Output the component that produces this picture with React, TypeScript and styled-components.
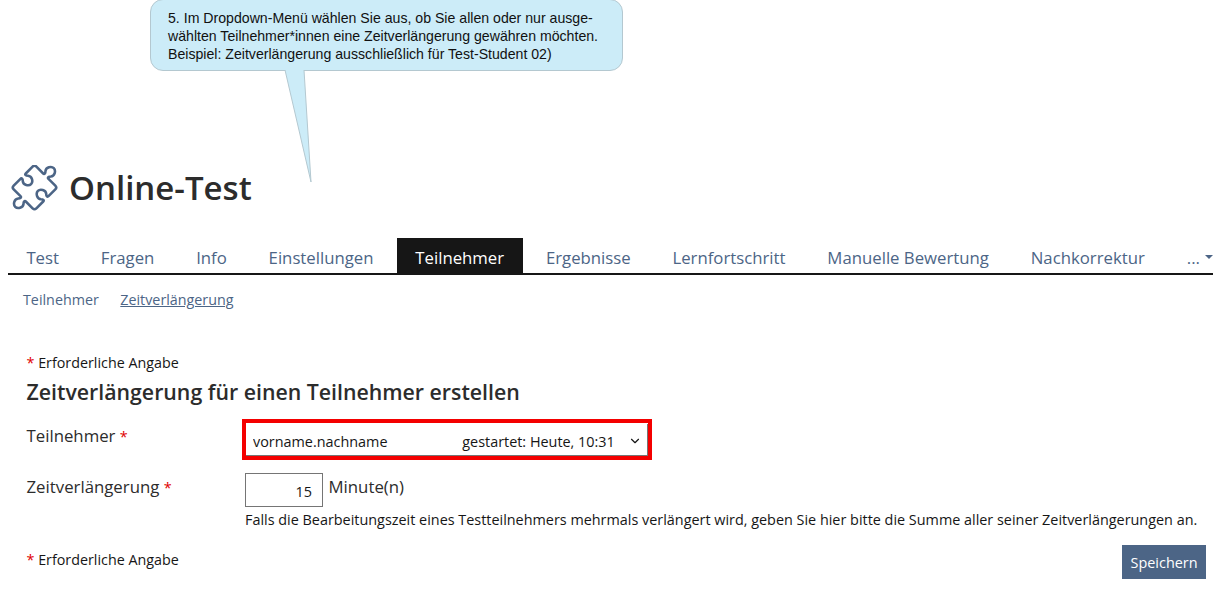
import { ChevronDown } from 'lucide-react'
import styled, { createGlobalStyle } from 'styled-components'

const GlobalStyle = createGlobalStyle`
  html, body {
    margin: 0;
    padding: 0;
    background: #fff;
    font-family: "Open Sans", sans-serif;
    color: #161616;
  }
`

const Page = styled.div`
  position: relative;
  width: 1213px;
  height: 589px;
  overflow: hidden;
`

const Callout = styled.div`
  position: absolute;
  left: 150px;
  top: -1px;
  width: 473px;
  height: 72px;
  box-sizing: border-box;
  padding: 9px 17px;
  background: #ccecf8;
  border: 1px solid #b4c8d0;
  border-radius: 13px;
  font-family: "Liberation Sans", sans-serif;
  font-size: 14.13px;
  line-height: 18px;
  color: #111;
  white-space: nowrap;
`

const CalloutTail = styled.svg`
  position: absolute;
  left: 280px;
  top: 70px;
`

const Header = styled.header`
  display: flex;
  align-items: center;
  gap: 10px;
  padding: 165px 0 0 11px;
  height: 46px;
`

const Title = styled.h1`
  margin: 0;
  font-size: 33px;
  line-height: 46px;
  font-weight: 600;
  color: #2c2c2c;
`

const Tabs = styled.nav`
  display: flex;
  margin: 27px 0 0 8px;
  height: 35px;
  border-bottom: 2px solid #161616;
`

const Tab = styled.a<{ $active?: boolean }>`
  display: flex;
  align-items: center;
  padding: 4px 18.4px 0;
  margin-right: 5px;
  font-size: 16.76px;
  color: ${({ $active }) => ($active ? '#fff' : '#4c6586')};
  background: ${({ $active }) => ($active ? '#161616' : 'transparent')};
`

const MoreTab = styled(Tab)`
  margin: 0 0 0 auto;
  padding: 4px 0 0 0;
  gap: 5px;
`

const Caret = styled.span`
  border-left: 4px solid transparent;
  border-right: 4px solid transparent;
  border-top: 4px solid #4c6586;
  margin-bottom: 2px;
`

const SubTabs = styled.div`
  display: flex;
  gap: 21.5px;
  padding: 15px 0 0 23px;
  font-size: 14.3px;
  line-height: 20px;
`

const SubTab = styled.a<{ $active?: boolean }>`
  color: #4c6586;
  text-decoration: ${({ $active }) => ($active ? 'underline' : 'none')};
`

const Form = styled.form`
  padding: 43px 7px 0 26.5px;
`

const Required = styled.div`
  font-size: 14.3px;
  line-height: 20px;
  color: #161616;
`

const FooterRequired = styled(Required)`
  padding-top: 5px;
`

const Star = styled.span`
  font-size: 14.4px;
  color: #e00000;
`

const FormTitle = styled.h2`
  margin: 5px 0 0;
  font-size: 21.3px;
  line-height: 27px;
  font-weight: 600;
  color: #2c2c2c;
`

const Row = styled.div`
  display: grid;
  grid-template-columns: 218.5px 1fr;
`

const UserRow = styled(Row)`
  margin-top: 14px;
`

const TimeRow = styled(Row)`
  margin-top: 13px;
`

const Label = styled.label<{ $top: number }>`
  font-size: 16.8px;
  line-height: 22px;
  padding-top: ${({ $top }) => $top}px;
  color: #2c2c2c;
`

const Highlight = styled.div`
  position: relative;
  width: 402px;
  height: 32px;
  border: 4px solid #f40000;
  padding-top: 1px;
  margin-left: -3px;
`

const Select = styled.select`
  display: block;
  width: 100%;
  height: 100%;
  box-sizing: border-box;
  padding: 3px 7px 0;
  appearance: none;
  background: #fff;
  border: 0;
  border-right: 1px solid #757575;
  border-bottom: 1px solid #757575;
  border-radius: 0;
  font-family: "Open Sans", sans-serif;
  font-size: 14.4px;
  color: #161616;
`

const SelectChevron = styled(ChevronDown)`
  position: absolute;
  right: 6px;
  top: 11px;
  pointer-events: none;
  color: #161616;
`

const InputLine = styled.div`
  display: flex;
  gap: 5.5px;
  font-size: 16.8px;
  line-height: 22px;
  color: #2c2c2c;
`

const Unit = styled.span`
  padding-top: 3px;
`

const NumberInput = styled.input`
  width: 78px;
  height: 34px;
  box-sizing: border-box;
  padding: 2px 10px 0 0;
  border: 1px solid #757575;
  text-align: right;
  font-family: "Open Sans", sans-serif;
  font-size: 14.4px;
  color: #161616;
`

const Hint = styled.div`
  margin-top: 3px;
  font-size: 14.4px;
  line-height: 19px;
  white-space: nowrap;
  color: #161616;
`

const Footer = styled.div`
  display: flex;
  justify-content: space-between;
  align-items: flex-start;
  margin-top: 16px;
`

const SaveButton = styled.button`
  height: 34px;
  padding: 0 8.5px;
  border: 0;
  background: #4c6586;
  color: #fff;
  font-family: "Open Sans", sans-serif;
  font-size: 14.4px;
`

function PuzzleIcon() {
  return (
    <svg width="48" height="46" viewBox="0 0 48 46" fill="none" stroke="#4c6586" strokeWidth="2.4" strokeLinejoin="round">
      <path
        transform="translate(23.5 22.5) rotate(45) scale(1.07)"
        d="M-12.5-15H-3.5C-2-15-2-16.5-3.5-18C-6-21-3-25.5 0-25.5C3-25.5 6-21 3.5-18C2-16.5 2-15 3.5-15H12.5Q15-15 15-12.5V-3.5C15-2 13.5-2 12-3.5C9-6 4.5-3 4.5 0C4.5 3 9 6 12 3.5C13.5 2 15 2 15 3.5V12.5Q15 15 12.5 15H3.5C2 15 2 16.5 3.5 18C6 21 3 25.5 0 25.5C-3 25.5-6 21-3.5 18C-2 16.5-2 15-3.5 15H-12.5Q-15 15-15 12.5V3.5C-15 2-13.5 2-12 3.5C-9 6-4.5 3-4.5 0C-4.5-3-9-6-12-3.5C-13.5-2-15-2-15-3.5V-12.5Q-15-15-12.5-15Z"
      />
    </svg>
  )
}

export default function App() {
  return (
    <Page>
      <GlobalStyle />
      <Callout>
        5. Im Dropdown-Menü wählen Sie aus, ob Sie allen oder nur ausge-
        <br />
        wählten Teilnehmer*innen eine Zeitverlängerung gewähren möchten.
        <br />
        Beispiel: Zeitverlängerung ausschließlich für Test-Student 02)
      </Callout>
      <CalloutTail width="40" height="115" viewBox="0 0 40 115">
        <path d="M5 0 L31 112 L24 0 Z" fill="#ccecf8" />
        <path d="M5 0 L31 112 L24 0" fill="none" stroke="#b4c8d0" strokeWidth="1" />
      </CalloutTail>
      <Header>
        <PuzzleIcon />
        <Title>Online-Test</Title>
      </Header>
      <Tabs>
        <Tab>Test</Tab>
        <Tab>Fragen</Tab>
        <Tab>Info</Tab>
        <Tab>Einstellungen</Tab>
        <Tab $active>Teilnehmer</Tab>
        <Tab>Ergebnisse</Tab>
        <Tab>Lernfortschritt</Tab>
        <Tab>Manuelle Bewertung</Tab>
        <Tab>Nachkorrektur</Tab>
        <MoreTab>
          ...
          <Caret />
        </MoreTab>
      </Tabs>
      <SubTabs>
        <SubTab>Teilnehmer</SubTab>
        <SubTab $active>Zeitverlängerung</SubTab>
      </SubTabs>
      <Form>
        <Required>
          <Star>*</Star> Erforderliche Angabe
        </Required>
        <FormTitle>Zeitverlängerung für einen Teilnehmer erstellen</FormTitle>
        <UserRow>
          <Label $top={6}>
            Teilnehmer <Star>*</Star>
          </Label>
          <Highlight>
            <Select defaultValue="a">
              <option value="a">vorname.nachname{'\u00a0'.repeat(20)}gestartet: Heute, 10:31</option>
            </Select>
            <SelectChevron size={14} strokeWidth={2} />
          </Highlight>
        </UserRow>
        <TimeRow>
          <Label $top={3}>
            Zeitverlängerung <Star>*</Star>
          </Label>
          <div>
            <InputLine>
              <NumberInput defaultValue="15" />
              <Unit>Minute(n)</Unit>
            </InputLine>
            <Hint>Falls die Bearbeitungszeit eines Testteilnehmers mehrmals verlängert wird, geben Sie hier bitte die Summe aller seiner Zeitverlängerungen an.</Hint>
          </div>
        </TimeRow>
        <Footer>
          <FooterRequired>
            <Star>*</Star> Erforderliche Angabe
          </FooterRequired>
          <SaveButton type="button">Speichern</SaveButton>
        </Footer>
      </Form>
    </Page>
  )
}
